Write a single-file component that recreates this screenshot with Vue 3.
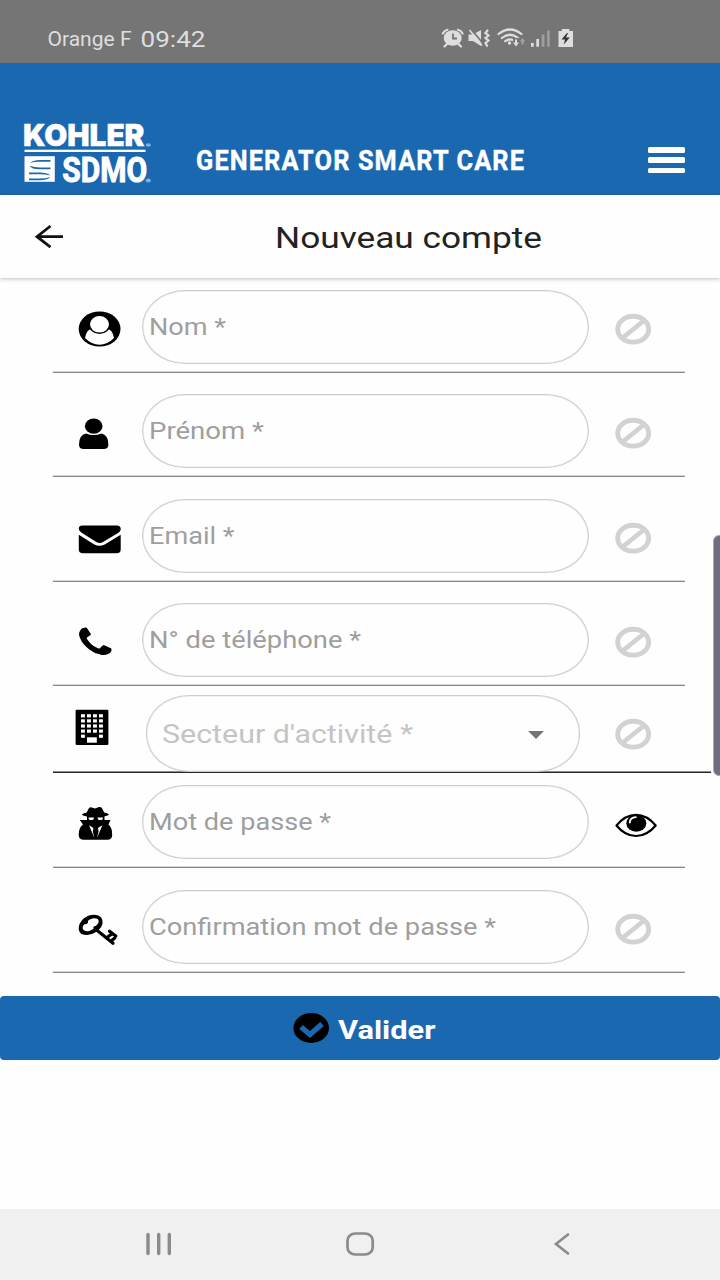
<script setup>
const rows = [
  { id: 'nom', label: 'Nom *', width: 77 },
  { id: 'prenom', label: 'Prénom *', width: 115 },
  { id: 'email', label: 'Email *', width: 85.5 },
  { id: 'phone', label: 'N° de téléphone *', width: 212 },
  { id: 'sector', label: "Secteur d'activité *", width: 251 },
  { id: 'password', label: 'Mot de passe *', width: 182 },
  { id: 'confirm', label: 'Confirmation mot de passe *', width: 347 },
]
const windowsGrid = []
for (let r = 0; r < 5; r++) {
  for (let c = 0; c < 4; c++) {
    if (r === 4 && (c === 1 || c === 2)) continue
    windowsGrid.push({ x: 28 + c * 6, y: 19.2 + r * 5.1 })
  }
}
</script>

<template>
  <div class="screen">
    <div class="status">
      <svg width="360" height="63" viewBox="0 0 360 63">
        <text x="47.500" y="46" font-size="21" textLength="84" lengthAdjust="spacingAndGlyphs">Orange F</text>
        <text x="140.500" y="46.500" font-size="22.500" textLength="65" lengthAdjust="spacingAndGlyphs">09:42</text>
      </svg>
      <svg width="360" height="63" viewBox="360 0 360 63">
        <ellipse cx="452.700" cy="38" rx="9" ry="7.800" />
        <path d="M447 44l-2.500 2.500M458.500 44l2.500 2.500M442.800 33.500q1.500-3 4.700-3.700M462.600 33.500q-1.500-3-4.700-3.700" class="s2" />
        <path d="M453 33.500v5h4" class="cut" />
        <path d="M468.500 34.500h4.500l8-4.500v16l-8-5h-4.500z" />
        <path d="M470.500 28.500l13 15.500" class="cut" />
        <path d="M469.500 30l12.500 15.500" class="s1" />
        <path d="M487.500 30.500l-2 2.500 3 2.500-3 2.500 3 2.500-3 2.500 1.500 2.800" class="s2" />
        <path d="M498.500 34q11.500-9 23 0M501.800 38q8.200-6.500 16.400 0M505.200 41.200q4.800-3.500 9.600 0" class="s2" />
        <circle cx="509.500" cy="43" r="1.700" />
        <path d="M513 38h6v8h-6z" fill="#757575" />
        <path d="M515 39.500h2v3h2l-3 4-3-4h2z" />
        <path d="M521.500 44.500v-3h-1.800l2.800-3.500 2.800 3.500h-1.800v3z" opacity=".45" />
        <path d="M531 43h2.700v3.700h-2.700zM536.300 39h2.700v7.700h-2.700z" />
        <path d="M541.700 34.500h2.700v12.200h-2.700zM547.200 30.500h2.500v16.200h-2.500z" opacity=".4" />
        <path d="M558.500 31h3.300v-2h7.500v2h3.700v16h-14.500z" />
        <path d="M567 33l-5.500 6.500h3.500l-1.200 5 6-7h-3.800l2-4.500z" fill="#333" />
      </svg>
    </div>

    <header class="brand">
      <svg width="180" height="132" viewBox="0 63 180 132" fill="#fff">
        <text x="23" y="145.800" class="kohler" font-size="30" textLength="121.500" lengthAdjust="spacingAndGlyphs">KOHLER</text>
        <rect x="24.500" y="149.700" width="121" height="2.300" />
        <rect x="24.500" y="156.200" width="30.300" height="25.600" />
        <path d="M30 162.800q4-2.800 10-2.800h10.500v1.700H40q-5 0-10 1.100zM29.500 165.700q5 1.700 10.500 1.700h10.500v1.800H39q-7 0-9.500-3.500zM29 172.500h10.500q8 0 11 3-5-1.300-11-1.300H29zM29 178.600h10.500q6 0 11-1.600-3.500 3.300-11 3.300H29z" fill="#1a68b0" />
        <text x="62.300" y="181.800" class="rob bold heavy" font-size="35" textLength="85" lengthAdjust="spacingAndGlyphs">SDMO</text>
        <ellipse cx="148.300" cy="145" rx="2.600" ry="1.800" fill="#73b3e8" />
        <ellipse cx="148.300" cy="180.500" rx="2.600" ry="1.900" fill="#73b3e8" />
      </svg>
      <svg width="380" height="132" viewBox="180 63 380 132" fill="#fff">
        <text x="196" y="170.200" class="rob bold spaced" font-size="27" textLength="329" lengthAdjust="spacingAndGlyphs">GENERATOR SMART CARE</text>
      </svg>
      <div class="menu"><i></i><i></i><i></i></div>
    </header>

    <div class="titlebar">
      <svg width="100" height="83" viewBox="0 195 100 83">
        <path d="M50.500 226L37 236.700l13.500 10.500M37 236.700h26" fill="none" stroke="#111" stroke-width="2.800" />
      </svg>
      <svg width="620" height="83" viewBox="100 195 620 83" fill="#222">
        <text x="275" y="248" class="rob" font-size="29.500" textLength="267" lengthAdjust="spacingAndGlyphs">Nouveau compte</text>
      </svg>
    </div>

    <main class="form">
      <div v-for="row in rows" :key="row.id" class="row" :class="row.id">
        <svg class="icon" width="89" height="75" viewBox="0 0 89 75">
          <template v-if="row.id === 'nom'">
            <ellipse cx="46.600" cy="39" rx="20.900" ry="17.600" />
            <path d="M32 48q1.500-8.500 6.500-9 8 5.500 16 0 5 .5 6.500 9-6.500 6.700-14.500 6.700T32 48z" fill="#fff" />
            <ellipse cx="46.500" cy="34.300" rx="10.200" ry="9" fill="#fff" stroke="#000" stroke-width="1.400" />
          </template>
          <template v-else-if="row.id === 'prenom'">
            <ellipse cx="40.700" cy="32.200" rx="8.800" ry="7.600" />
            <path d="M33 39.500q7.700 3 15.400 0 7 1.500 7 11 0 4.500-4.700 4.500h-20q-4.700 0-4.700-4.500 0-9.500 7-11z" />
          </template>
          <template v-else-if="row.id === 'email'">
            <path d="M29.500 26.500h34.500q3.700 0 3.700 3.500 0 2.500-3.500 4.500L50 43.100q-3.300 1.800-6.600 0L29 34q-3.200-2-3.200-4.200 0-3.300 3.700-3.300z" />
            <path d="M25.800 35.800l15.500 9.600q5.200 2.600 10.400 0l16-9.600v14.700q0 3.800-4 3.800H29.800q-4 0-4-3.800z" />
          </template>
          <g v-else-if="row.id === 'phone'" transform="translate(21.600 22) scale(.0231 .0196)">
            <path d="M1600 1240q0 27-10 70.500t-21 68.500q-21 50-122 106-94 51-186 51-27 0-53-3.500t-57.500-12.500-47-14.500-55.500-20.500-49-18q-98-35-175-83-127-79-264-216t-216-264q-48-77-83-175-3-9-18-49t-20.500-55.500-14.500-47-12.500-57.500-3.500-53q0-92 51-186 56-101 106-122 25-11 68.500-21t70.500-10q14 0 21 3 18 6 53 76 11 19 30 54t35 63.500 31 53.500q3 4 17.500 25t21.500 35.500 7 28.500q0 20-28.500 50t-62 55-62 53-28.500 46q0 9 5 22.500t8.500 20.500 14 24 11.500 19q76 137 174 235t235 174q2 1 19 11.500t24 14 20.500 8.500 22.500 5q18 0 46-28.500t53-62 55-62 50-28.500q14 0 28.500 7t35.500 21.500 25 17.500q25 15 53.500 31t63.500 35 54 30q70 35 76 53 3 7 3 21z" />
          </g>
          <template v-else-if="row.id === 'sector'">
            <rect x="22.600" y="14.700" width="32.800" height="35.300" rx="1" />
            <rect v-for="(w, i) in windowsGrid" :key="i" :x="w.x" :y="w.y" width="3.900" height="3.200" fill="#fff" />
            <rect x="34" y="42.300" width="9.800" height="5.400" fill="#fff" />
          </template>
          <template v-else-if="row.id === 'password'">
            <path d="M28.700 29.800q1.800-1.800 5-2.300l2.300-4.500q1-1.200 2.700-.6l3.300 1 4-1.300q2.200-.3 3 1.200l2.200 4.200q3.500.5 5 2.300-4 2.200-14 2.200t-13.500-2.200z" />
            <path d="M26.800 35h7.200v-4h17.500v4h6l-2 4.600q3.700 3 3.700 10.200 0 5-5 5H30.900q-5.200 0-5.200-5 0-7.500 4.300-10.200z" />
            <path d="M35.500 32.600h5.600l-.8 2q-2 1-4.400 0zM44.400 32.600h5.600l-.5 2q-2.400 1-4.400 0z" fill="#fff" />
            <path d="M36 40.300l4.400 2.700-.6 3.500 1.600 6.500zM49.400 40.300L45 43l.6 3.500-1.600 6.500z" fill="#fff" />
          </template>
          <template v-else>
            <path fill-rule="evenodd" d="M25.700 38.500C25.700 31 33 24.700 41 24.700c5.500 0 8.600 3 8.600 7.300 0 3-1.300 5.400-3.600 7.600l-3.500 2.700C39.500 44 36 45 33 45c-4.500 0-7.300-2.800-7.300-6.500zM29.700 38.500c.7 2.500 3.800 3.300 6.300 2.500 1.800-.6 3.300-1.200 4.600-2.200-.8-1.300.2-2.700 2-2.700 2.200-1.300 3.400-3.600 3-5.500-.5-2.300-3.300-2.800-6-2.200-2.300.5-3.500 1.400-4.800 2.700 1 1.800-1 3.500-3.600 3.200-1.100 1.300-1.700 2.800-1.500 4.200z" />
            <path d="M43 39.500L60 53.200M56.500 41.200l6.300 4.800M54 47.500l5.300-4M59 50.300l2.800-2.200" fill="none" stroke="#000" stroke-width="3.200" stroke-linecap="round" stroke-linejoin="round" />
          </template>
        </svg>

        <div class="field">
          <svg width="400" height="71" viewBox="0 0 400 71">
            <text x="0" :y="row.id === 'sector' ? 45.5 : 44" class="rob" :font-size="row.id === 'sector' ? 26 : 23" :textLength="row.width" lengthAdjust="spacingAndGlyphs">{{ row.label }}</text>
          </svg>
          <i v-if="row.id === 'sector'" class="caret"></i>
        </div>

        <svg v-if="row.id === 'password'" class="state" width="44" height="75" viewBox="0 0 44 75">
          <path d="M1.500 40.500Q10 29.800 21 29.800t19.700 10.700Q32 51 21 51T1.500 40.500z" fill="none" stroke="#000" stroke-width="2.200" stroke-linejoin="round" />
          <ellipse cx="21.300" cy="38.200" rx="10" ry="8.500" />
          <path d="M14.800 37.500q.3-5 6-5.300" fill="none" stroke="#fff" stroke-width="1.800" stroke-linecap="round" />
        </svg>
        <svg v-else class="state" width="44" height="75" viewBox="0 0 44 75" fill="none" stroke="#d2d2d2">
          <ellipse cx="18.200" cy="39.200" rx="15.500" ry="12.900" stroke-width="4.900" />
          <path d="M8 47.500L28.500 31" stroke-width="4.800" />
        </svg>
      </div>
    </main>

    <button class="submit">
      <svg width="720" height="64" viewBox="0 996 720 64">
        <ellipse cx="311.200" cy="1028" rx="17.800" ry="15" />
        <path d="M301 1027l9 7.500 12-10.500" fill="none" stroke="#1a68b0" stroke-width="5.400" />
        <text x="338" y="1038.800" class="rob bold" font-size="26" fill="#fff" textLength="97.500" lengthAdjust="spacingAndGlyphs">Valider</text>
      </svg>
    </button>

    <nav class="nav">
      <svg width="720" height="71" viewBox="0 1209 720 71" fill="none" stroke="#8b8b8b">
        <path d="M148 1234.500v19M158.700 1234.500v19M169.300 1234.500v19" stroke-width="3.400" stroke-linecap="round" />
        <rect x="347.500" y="1233.500" width="25.200" height="21" rx="8" ry="7" stroke-width="2.700" />
        <path d="M568 1234.500l-12 9.500 12 9.500" stroke-width="2.600" stroke-linecap="round" />
      </svg>
    </nav>
    <div class="edge"></div>
  </div>
</template>

<style>
body { background: #fff; overflow: hidden; }
</style>
<style scoped>
.screen { position: relative; width: 720px; height: 1280px; display: flex; flex-direction: column; overflow: hidden; background: #fefefe; font-family: Roboto, sans-serif; }
svg { display: block; flex: none; }
.rob { font-family: Roboto, sans-serif; }
.bold { font-weight: 700; }
.heavy { stroke: #fff; stroke-width: 1; }
.spaced { letter-spacing: 1.2px; stroke: #fff; stroke-width: .4; }
.kohler { font-family: Inter, sans-serif; font-weight: 900; stroke: #fff; stroke-width: .4; }
.status { display: flex; flex: none; height: 63px; background: #757575; fill: #dedede; }
.s2 { fill: none; stroke: #dedede; stroke-width: 2.2; stroke-linecap: round; }
.s1 { fill: none; stroke: #dedede; stroke-width: 1.6; }
.cut { fill: none; stroke: #757575; stroke-width: 1.8; }
.brand { display: flex; flex: none; height: 132px; background: #1a68b0; }
.menu { display: flex; flex-direction: column; gap: 4.5px; width: 37px; margin: 84px 0 0 88px; }
.menu i { height: 5.8px; border-radius: 1.5px; background: #fff; }
.titlebar { display: flex; flex: none; height: 83px; background: #fefefe; box-shadow: 0 1px 4px rgba(0, 0, 0, .25); }
.form { flex: none; padding: 1px 35px 0 53px; }
.row { display: flex; align-items: flex-start; height: 104px; box-sizing: border-box; padding-top: 21px; border-bottom: 1px solid #83888c; box-shadow: 0 -1px 0 -0px transparent, inset 0 -1px 0 #d4d6d8; }
.row.nom { height: 94px; padding-top: 11px; }
.row.email { height: 105px; padding-top: 22px; }
.row.sector { height: 87px; width: 658px; padding-top: 9px; border-color: #282828; box-shadow: inset 0 -1px 0 #8a8a8a; }
.row.password { height: 95px; padding-top: 12px; }
.row.confirm { height: 105px; padding-top: 21.5px; }
.field { box-sizing: border-box; width: 447px; height: 74px; border: 1px solid #cdcdcd; box-shadow: inset 0 0 0 .6px #e4e4e4; border-radius: 43px / 37px; padding-left: 6px; overflow: hidden; fill: #9e9e9e; }
.sector .field { display: flex; width: 434px; height: 77px; margin: 0 9px 0 4px; padding-left: 14.5px; fill: #c4c4c6; }
.sector .field svg { margin-right: -34px; padding-top: 1px; }
.caret { flex: none; align-self: flex-start; margin-top: 35px; border: 8.500px solid transparent; border-top: 8px solid #757575; border-bottom: 0; }
.state { margin-left: 26px; }
.submit { flex: none; display: block; width: 720px; height: 64px; margin: 23px 0 0; padding: 0; border: 0; border-radius: 4px; background: #1a68b0; overflow: hidden; }
.nav { flex: none; height: 71px; margin-top: auto; background: #f0f0f0; }
.edge { position: absolute; left: 713px; top: 535px; width: 12px; height: 241px; box-sizing: border-box; border: 1px solid #aaa9b5; border-radius: 7px; background: #6f6d80; }
</style>
